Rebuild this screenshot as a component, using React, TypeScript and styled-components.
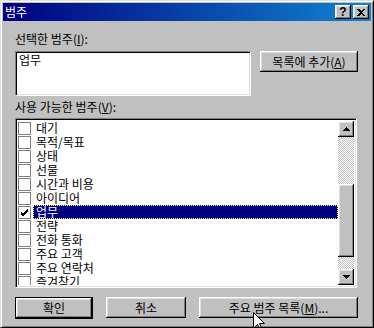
import React from 'react';
import styled, { createGlobalStyle } from 'styled-components';

const Global = createGlobalStyle`
  html, body { margin: 0; padding: 0; background: #c0c0c0; }
  body {
    font-family: "Noto Sans CJK KR", "Noto Sans", sans-serif;
    font-size: 12px;
    color: #000;
  }
  * { box-sizing: border-box; }
`;

const raised = `
  box-shadow: inset -1px -1px #000, inset 1px 1px #fff, inset -2px -2px #808080, inset 2px 2px #dfdfdf;
`;

const Window = styled.div`
  position: relative;
  width: 374px;
  height: 328px;
  background: #c0c0c0;
  border: 1px solid;
  border-color: #dfdfdf #000 #000 #dfdfdf;
  box-shadow: inset 1px 1px #fff, inset -1px -1px #808080;
  padding: 2px;
  display: flex;
  flex-direction: column;
  overflow: hidden;
`;

const TitleBar = styled.div`
  height: 18px;
  flex: none;
  display: flex;
  align-items: center;
  padding: 0 2px 0 2px;
  background: linear-gradient(90deg, #000080 0%, #1084d0 100%);
`;

const TitleText = styled.div`
  flex: 1;
  color: #fff;
  line-height: 18px;
  font-size: 12px;
`;

const TitleButton = styled.div<{ $gap?: number }>`
  width: 16px;
  height: 14px;
  background: #c0c0c0;
  ${raised}
  display: flex;
  align-items: center;
  justify-content: center;
  margin-left: ${(p) => p.$gap ?? 0}px;
  font-family: "Liberation Sans", Arial, sans-serif;
  font-weight: bold;
  font-size: 12px;
  line-height: 14px;
`;

const Body = styled.div`
  flex: 1;
  display: flex;
  flex-direction: column;
  padding: 10px 12px 0 12px;
`;

const TopGrid = styled.div`
  display: grid;
  grid-template-columns: 236px 98px;
  column-gap: 9px;
  row-gap: 4px;
`;

const Label = styled.div<{ $mt?: number }>`
  height: 16px;
  line-height: 16px;
  white-space: nowrap;
  margin-top: ${(p) => p.$mt ?? 0}px;
`;

const TextBox = styled.div`
  grid-column: 1;
  width: 236px;
  height: 45px;
  background: #fff;
  border: 1px solid;
  border-color: #808080 #fff #fff #808080;
  box-shadow: inset 1px 1px #000, inset -1px -1px #dfdfdf;
  padding: 0 3px;
  line-height: 16px;
`;

const Button = styled.div<{ $w: number; $default?: boolean }>`
  width: ${(p) => p.$w}px;
  height: ${(p) => (p.$default ? 22 : 21)}px;
  background: #c0c0c0;
  display: flex;
  align-items: center;
  justify-content: center;
  white-space: nowrap;
  line-height: 16px;
  ${(p) =>
    p.$default
      ? `border: 1px solid #000; ${raised}`
      : raised}
  align-self: start;
`;

const List = styled.div`
  margin-top: 3px;
  width: 342px;
  height: 170px;
  background: #fff;
  border: 1px solid;
  border-color: #808080 #fff #fff #808080;
  box-shadow: inset 1px 1px #000, inset -1px -1px #dfdfdf;
  padding: 2px;
  display: flex;
`;

const Items = styled.div`
  flex: 1;
  overflow: hidden;
`;

const Row = styled.div`
  display: flex;
  align-items: center;
  height: 14px;
`;

const Check = styled.div`
  width: 13px;
  height: 13px;
  flex: none;
  border: 1px solid #808080;
  background: #fff;
  display: flex;
  align-items: center;
  justify-content: center;
`;

const ItemText = styled.div<{ $selected?: boolean }>`
  flex: 1;
  height: 14px;
  margin-left: 2px;
  padding-left: 3px;
  line-height: 14px;
  white-space: nowrap;
  color: ${(p) => (p.$selected ? '#fff' : '#000')};
  background: ${(p) => (p.$selected ? '#000080' : 'transparent')};
  outline: 1px dotted ${(p) => (p.$selected ? '#ffff80' : 'transparent')};
  outline-offset: -1px;
`;

const ScrollBar = styled.div`
  width: 16px;
  flex: none;
  display: flex;
  flex-direction: column;
  background: repeating-conic-gradient(#c0c0c0 0 25%, #fff 0 50%) 0 0 / 2px 2px;
`;

const SBButton = styled.div`
  width: 16px;
  height: 16px;
  flex: none;
  background: #c0c0c0;
  ${raised}
  display: flex;
  align-items: center;
  justify-content: center;
`;

const Track = styled.div<{ $top: number }>`
  flex: 1;
  padding-top: ${(p) => p.$top}px;
`;

const Thumb = styled.div<{ $h: number }>`
  width: 16px;
  height: ${(p) => p.$h}px;
  background: #c0c0c0;
  ${raised}
`;

const BottomRow = styled.div`
  display: flex;
  gap: 13px;
  margin-top: 9px;
`;

const Cursor = styled.svg`
  position: absolute;
  left: 252px;
  top: 311px;
`;

const items = [
  '대기',
  '목적/목표',
  '상태',
  '선물',
  '시간과 비용',
  '아이디어',
  '업무',
  '전략',
  '전화 통화',
  '주요 고객',
  '주요 연락처',
  '즐겨찾기',
];

const Tick = () => (
  <svg width="9" height="9" viewBox="0 0 9 9">
    <path d="M1 4 L3 6 L8 1 M1 5 L3 7 L8 2 M1 6 L3 8 L8 3" stroke="#000" strokeWidth="1" fill="none" shapeRendering="crispEdges" />
  </svg>
);

const Up = () => (
  <svg width="7" height="4" viewBox="0 0 7 4">
    <path d="M3.5 0 L7 4 L0 4 Z" fill="#000" shapeRendering="crispEdges" />
  </svg>
);

const Down = () => (
  <svg width="7" height="4" viewBox="0 0 7 4">
    <path d="M0 0 L7 0 L3.5 4 Z" fill="#000" shapeRendering="crispEdges" />
  </svg>
);

export default function App() {
  return (
    <>
      <Global />
      <Window>
        <TitleBar>
          <TitleText>범주</TitleText>
          <TitleButton>?</TitleButton>
          <TitleButton $gap={2}>
            <svg width="8" height="7" viewBox="0 0 8 7">
              <path d="M0 0 L2 0 L4 2 L6 0 L8 0 L5 3.5 L8 7 L6 7 L4 5 L2 7 L0 7 L3 3.5 Z" fill="#000" shapeRendering="crispEdges" />
            </svg>
          </TitleButton>
        </TitleBar>
        <Body>
          <TopGrid>
            <Label>
              선택한 범주(<u>I</u>):
            </Label>
            <div />
            <TextBox>업무</TextBox>
            <Button $w={98}>
              목록에 추가(<u>A</u>)
            </Button>
          </TopGrid>
          <Label $mt={3}>
            사용 가능한 범주(<u>V</u>):
          </Label>
          <List>
            <Items>
              {items.map((it) => (
                <Row key={it}>
                  <Check>{it === '업무' && <Tick />}</Check>
                  <ItemText $selected={it === '업무'}>{it}</ItemText>
                </Row>
              ))}
            </Items>
            <ScrollBar>
              <SBButton>
                <Up />
              </SBButton>
              <Track $top={47}>
                <Thumb $h={73} />
              </Track>
              <SBButton>
                <Down />
              </SBButton>
            </ScrollBar>
          </List>
          <BottomRow>
            <Button $w={78} $default>
              확인
            </Button>
            <Button $w={80}>취소</Button>
            <Button $w={159}>
              주요 범주 목록(<u>M</u>)...
            </Button>
          </BottomRow>
        </Body>
        <Cursor width="12" height="20" viewBox="0 0 12 20">
          <path d="M0.5 0.5 L0.5 16.5 L4.5 12.5 L7.5 18.5 L9.5 17.5 L6.5 11.5 L11.5 11.5 Z" fill="#fff" stroke="#000" strokeWidth="1" />
        </Cursor>
      </Window>
    </>
  );
}
